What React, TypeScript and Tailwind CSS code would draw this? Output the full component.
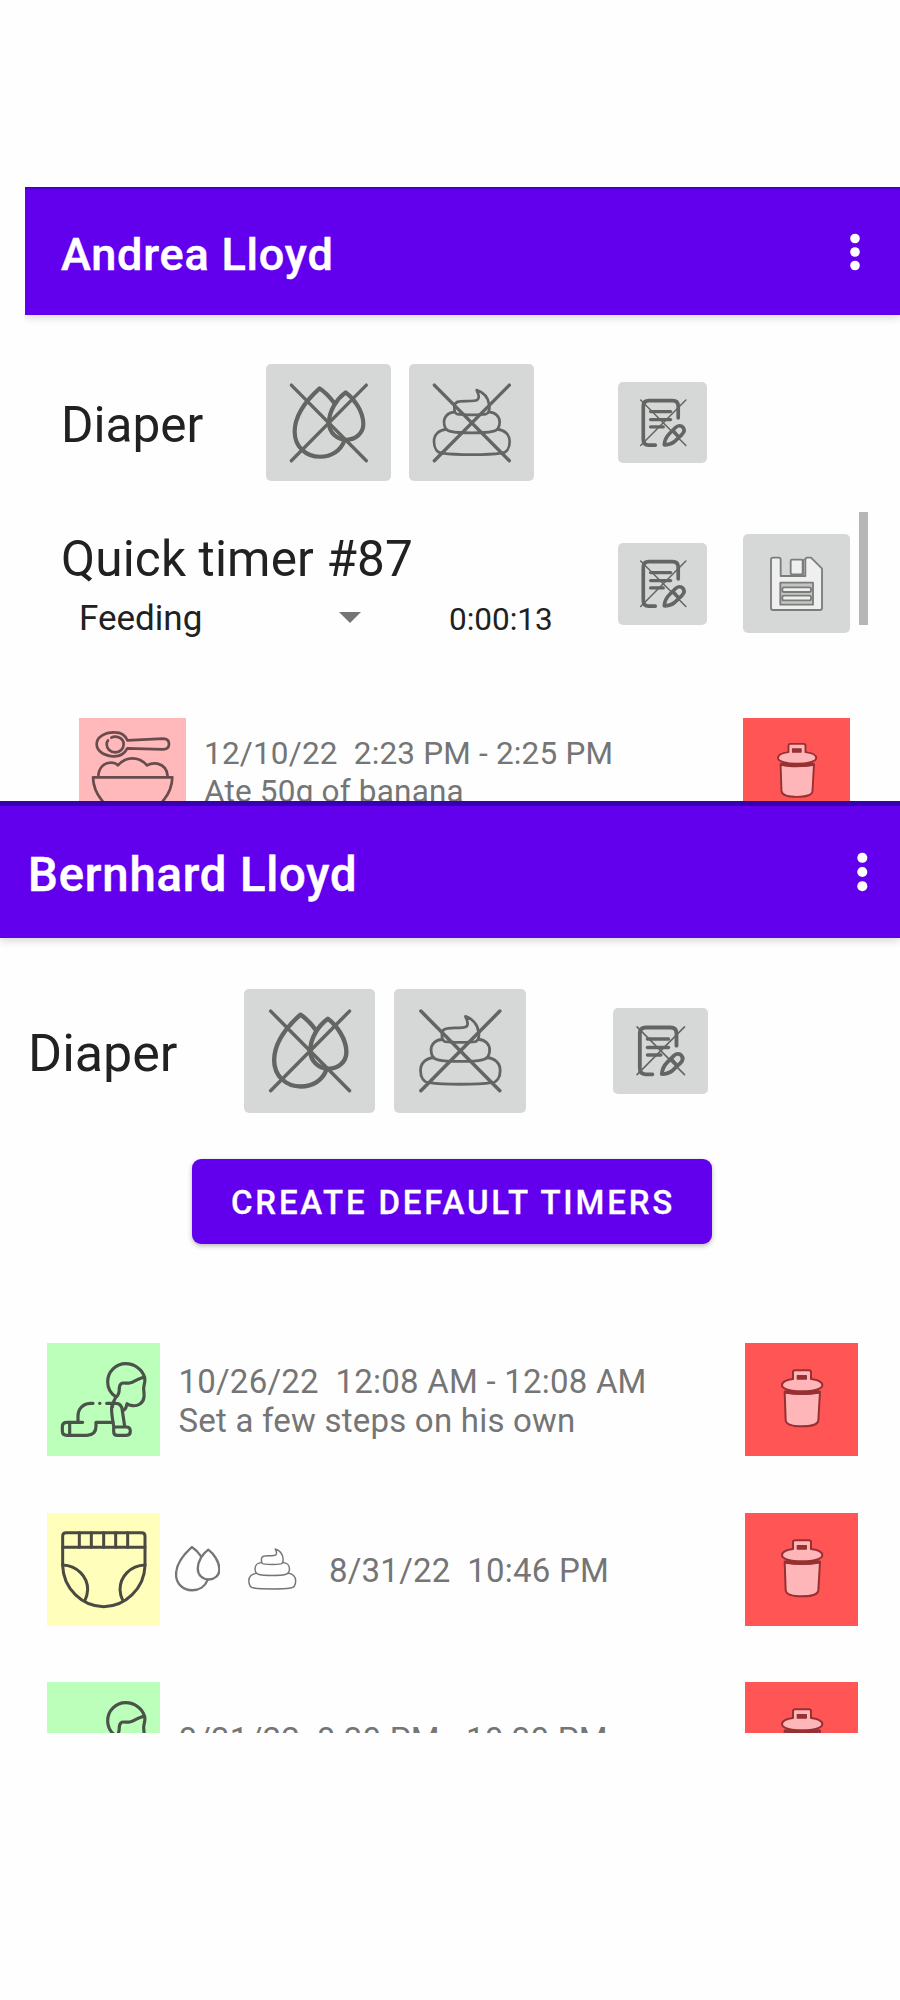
import type { ReactNode } from "react";

const DROPS = [
  "M205 117C190 97 175 82 161 73C125 105 86 150 86 203C86 248 120 278 162 278C196 278 224 260 235 230",
  "M239 85C262 102 292 140 292 180C292 208 268 227 242 227C213 227 189 206 189 176C189 140 212 105 239 85Z",
];

const POOP = [
  "M203 78C211 95 214 109 195 110C180 112 165 110 153 112C140 113 136 120 136 128C137 138 133 147 145 150C165 153 213 153 231 150C240 147 242 134 241 124C238 100 222 84 203 78Z",
  "M136 144C117 145 105 158 105 174C105 190 112 200 125 202C150 208 226 208 251 202C265 200 272 190 272 174C272 158 260 145 241 144",
  "M112 196C90 197 75 212 75 232C75 252 84 266 100 267C140 273 237 273 277 267C293 266 302 252 302 232C302 212 287 197 265 196",
];

function Lines({ paths, width }: { paths: string[]; width: number }) {
  return (
    <g fill="none" stroke="currentColor" strokeWidth={width} strokeLinecap="round" strokeLinejoin="round">
      {paths.map((d) => (
        <path key={d} d={d} />
      ))}
    </g>
  );
}

function WetIcon() {
  return (
    <svg viewBox="0 0 375 352" className="size-full text-[#636563]">
      <Lines paths={DROPS} width={12.5} />
      <Lines paths={["M76 63L301 290", "M301 63L76 290"]} width={10} />
    </svg>
  );
}

function SolidIcon() {
  return (
    <svg viewBox="0 0 375 352" className="size-full text-[#636563]">
      <Lines paths={POOP} width={8} />
      <Lines paths={["M76 63L301 290", "M301 63L76 290"]} width={10} />
    </svg>
  );
}

function NoteIcon() {
  return (
    <svg viewBox="0 0 269 245" className="size-full text-[#636563]">
      <Lines
        paths={["M181 108V73Q181 56 164 56H93Q76 56 76 73V173Q76 190 92 190H112"]}
        width={11}
      />
      <Lines paths={["M98 89H158", "M98 113H158", "M98 135H136"]} width={10} />
      <Lines
        paths={[
          "M139 189C140 172 147 163 155 155L173 137C180 130 190 130 195 136C201 143 199 151 192 158L170 179C160 187 150 189 139 189Z",
        ]}
        width={11}
      />
      <Lines paths={["M167 146L181 162"]} width={8} />
      <Lines paths={["M68 54L204 191", "M204 54L68 191"]} width={4.5} />
    </svg>
  );
}

function SaveIcon() {
  return (
    <svg viewBox="0 0 321 297" className="size-full" stroke="#7b7d7b" strokeWidth="5.5" strokeLinejoin="round">
      <path
        fill="#eeefee"
        d="M90 71H107Q113 71 113 77V126H187V77Q187 71 193 71H204L237 104V222Q237 228 231 228H90Q84 228 84 222V77Q84 71 90 71Z"
      />
      <path fill="none" d="M187 75L181 78V122" strokeWidth="4" />
      <rect x="143" y="77" width="36" height="44" rx="4" fill="#eeefee" />
      <rect x="112" y="146" width="98" height="66" fill="#c4c6c4" />
      <rect x="118" y="160" width="86" height="14" rx="5" fill="#eeefee" />
      <rect x="118" y="185" width="86" height="14" rx="5" fill="#eeefee" />
    </svg>
  );
}

function TrashIcon() {
  return (
    <svg viewBox="0 0 339 339" className="size-full" stroke="#963032" strokeWidth="6" strokeLinejoin="round">
      <path
        fill="#ffb6b8"
        d="M119 146C135 152 150 153 171 153S208 152 225 146L220 232C219 244 197 250 171 250S124 244 122 232Z"
      />
      <path fill="#963032" d="M122 145Q171 152 221 145V149Q171 156 122 149Z" />
      <path
        fill="#ffb6b8"
        d="M144 108V88Q144 82 150 82H192Q198 82 198 88V108C216 110 232 116 232 127C232 138 205 145 171 145S111 138 111 127C111 116 126 110 144 108Z"
      />
      <rect x="157" y="98" width="27" height="10" fill="#963032" strokeWidth="4" />
    </svg>
  );
}

function FeedingIcon() {
  return (
    <svg viewBox="0 0 321 321" className="size-full text-[#684b4c]">
      <Lines
        paths={[
          "M145 67L252 62Q270 62 270 78Q270 94 252 94L145 91C136 108 120 116 102 115C70 112 53 97 53 78C53 58 76 42 108 43C125 43 139 52 145 67Z",
          "M97 59C110 52 134 58 134 79C134 92 123 103 109 103C94 103 83 92 83 79Q83 72 87 67",
          "M58 175C59 149 75 133 98 134Q110 134 117 142C130 127 145 121 160 121S192 128 204 142Q218 134 235 137C255 142 265 157 266 175",
          "M42 178H280C278 230 240 272 206 275H116C82 272 44 230 42 178Z",
        ]}
        width={8}
      />
    </svg>
  );
}

function CrawlIcon() {
  return (
    <svg viewBox="0 0 339 339" className="size-full text-[#4a524a]">
      <Lines
        paths={[
          "M206 161C190 150 182 132 182 116C182 85 207 62 236 62C263 62 287 80 293 104C296 116 290 126 290 136C290 145 292 150 291 162C289 181 272 190 256 188Q246 187 240 182Q238 196 230 202",
          "M292 103C275 104 262 118 248 120C238 122 232 118 224 121C214 126 218 138 216 147C214 156 210 161 206 163Q198 176 196 192",
          "M179 181H206C220 181 225 190 226 203L233 250",
          "M195 188C191 200 195 220 200 250V266Q200 277 211 277H238Q250 277 250 265Q250 252 238 252H200",
          "M158 181H158.5",
          "M138 181H130C106 182 92 200 93 222V236",
          "M107 238H60Q46 238 46 251V264Q46 277 60 277H120Q147 276 147 250V238H198",
          "M68 238V277",
        ]}
        width={9.5}
      />
    </svg>
  );
}

function DiaperIcon() {
  return (
    <svg viewBox="0 0 339 339" className="size-full text-[#4a4a42]">
      <Lines
        paths={[
          "M47 103V69Q47 59 57 59H284Q294 59 294 69V103Z",
          "M97 59V103",
          "M133 59V103",
          "M170 59V103",
          "M206 59V103",
          "M242 59V103",
          "M47 103V158C49 228 107 281 170 281S292 228 294 158V103",
          "M47 156C90 158 122 190 122 230Q121 250 113 264",
          "M294 156C250 158 219 190 219 230Q220 250 228 264",
        ]}
        width={9}
      />
    </svg>
  );
}

function Tile({ className, children }: { className: string; children: ReactNode }) {
  return <div className={`shrink-0 ${className}`}>{children}</div>;
}

function KeyButton({ className, label, children }: { className: string; label: string; children: ReactNode }) {
  return (
    <button aria-label={label} className={`block shrink-0 rounded-[5px] bg-[#d6d8d7] ${className}`}>
      {children}
    </button>
  );
}

function Dots({ className }: { className: string }) {
  return (
    <svg viewBox="0 0 12 40" className={className} fill="#fff">
      <circle cx="6" cy="6.5" r="4.8" />
      <circle cx="6" cy="20" r="4.8" />
      <circle cx="6" cy="33.5" r="4.8" />
    </svg>
  );
}

function AndreaScreen() {
  return (
    <section className="ml-[25px] h-[614px] shrink-0 overflow-hidden">
      <header className="flex h-[127.5px] items-start bg-[#6200ee] bg-[linear-gradient(#3700b3,#6200ee00_3px)] pl-[36px] pt-[41px] shadow-[0_2px_9px_rgba(0,0,0,0.18)]">
        <h1 className="w-[787.5px] whitespace-pre text-[45px] leading-[54px] font-medium tracking-[0.8px] text-white [-webkit-text-stroke:0.5px_white]">Andrea Lloyd</h1>
        <Dots className="mt-[4px] h-[40px] w-[12px]" />
      </header>
      <div className="mt-[49px] flex h-[117.5px] items-center pl-[36px]">
        <div className="w-[205px] pt-[5px] text-[49.5px] leading-[58px] text-[#212121]">Diaper</div>
        <KeyButton label="Wet" className="h-[117.5px] w-[125px]"><WetIcon /></KeyButton>
        <KeyButton label="Solid" className="ml-[18px] h-[117.5px] w-[125px]"><SolidIcon /></KeyButton>
        <KeyButton label="Note" className="ml-[83.5px] h-[81.5px] w-[89.5px]"><NoteIcon /></KeyButton>
      </div>
      <div className="mt-[31px] flex h-[206px] items-start pl-[36px]">
        <div className="w-[556.5px] pt-[18px] text-[#212121]">
          <div className="whitespace-pre text-[49.5px] leading-[58px] tracking-[0.15px]">Quick timer #87</div>
          <div className="mt-[10px] flex items-start pl-[18px]">
            <div className="w-[260px] text-[35px] leading-[42px]">Feeding</div>
            <svg viewBox="0 0 22 11" className="mt-[14px] h-[11px] w-[22px]" fill="#757575"><path d="M0 0H22L11 11Z" /></svg>
            <div className="ml-[88px] text-[31.5px] leading-[44px]">0:00:13</div>
          </div>
        </div>
        <KeyButton label="Note" className="mt-[31px] h-[81.5px] w-[89.5px]"><NoteIcon /></KeyButton>
        <KeyButton label="Save" className="ml-[36px] mt-[22px] h-[99px] w-[107px]"><SaveIcon /></KeyButton>
        <div className="ml-[9px] h-[113px] w-[9px] bg-[#b6b6b6]" />
      </div>
      <div className="flex items-start pl-[54px]">
        <Tile className="size-[107px] bg-[#ffb9ba]"><FeedingIcon /></Tile>
        <div className="ml-[18px] w-[539px] pt-[17px] text-[31.5px] leading-[38px] tracking-[0.19px] whitespace-pre text-[#757575]">
          <div>12/10/22  2:23 PM - 2:25 PM</div>
          <div>Ate 50g of banana</div>
        </div>
        <Tile className="size-[107px] bg-[#ff5555]"><TrashIcon /></Tile>
      </div>
    </section>
  );
}

function BernhardScreen() {
  return (
    <section className="h-[932px] shrink-0 overflow-hidden">
      <header className="flex h-[137px] items-start border-t-[5px] border-[#3700b3] bg-[#6200ee] pl-[28px] pt-[41px] shadow-[0_2px_9px_rgba(0,0,0,0.18)]">
        <h1 className="w-[828px] whitespace-pre text-[47.2px] leading-[56px] font-medium tracking-[0.85px] text-white [-webkit-text-stroke:0.5px_white]">Bernhard Lloyd</h1>
        <Dots className="mt-[4px] h-[42px] w-[12.6px]" />
      </header>
      <div className="mt-[51px] flex h-[123.5px] items-center pl-[28px]">
        <div className="w-[215.5px] pt-[7px] text-[52px] leading-[60px] text-[#212121]">Diaper</div>
        <KeyButton label="Wet" className="h-[123.5px] w-[131.5px]"><WetIcon /></KeyButton>
        <KeyButton label="Solid" className="ml-[19px] h-[123.5px] w-[132px]"><SolidIcon /></KeyButton>
        <KeyButton label="Note" className="ml-[87px] h-[85.5px] w-[94.5px]"><NoteIcon /></KeyButton>
      </div>
      <button className="mt-[46.5px] ml-[192px] flex h-[85px] w-[520px] items-center justify-center rounded-[9px] bg-[#6200ee] pt-[3px] pl-[2px] text-[33px] font-medium tracking-[2.83px] whitespace-pre text-white shadow-[0_2px_5px_rgba(0,0,0,0.28)] [-webkit-text-stroke:0.3px_white]">
        CREATE DEFAULT TIMERS
      </button>
      <div className="mt-[99px] flex flex-col gap-[56.5px] pl-[46.5px] text-[33px] leading-[39px] tracking-[0.22px] whitespace-pre text-[#757575]">
        <div className="flex items-start">
          <Tile className="size-[113px] bg-[#bbffbb]"><CrawlIcon /></Tile>
          <div className="ml-[19px] w-[566.5px] pt-[19px]">
            <div>10/26/22  12:08 AM - 12:08 AM</div>
            <div>Set a few steps on his own</div>
          </div>
          <Tile className="size-[113px] bg-[#ff5555]"><TrashIcon /></Tile>
        </div>
        <div className="flex items-start">
          <Tile className="size-[113px] bg-[#ffffbb]"><DiaperIcon /></Tile>
          <div className="flex w-[585.5px] items-start pl-[15px]">
            <svg viewBox="81 68 216 216" className="mt-[33.5px] size-[45.5px] text-[#757575]"><Lines paths={DROPS} width={11} /></svg>
            <svg viewBox="71 74 235 202" className="ml-[28px] mt-[35.5px] h-[42px] w-[48.5px] text-[#757575]"><Lines paths={POOP} width={7} /></svg>
            <div className="ml-[32.5px] mt-[38.5px]">8/31/22  10:46 PM</div>
          </div>
          <Tile className="size-[113px] bg-[#ff5555]"><TrashIcon /></Tile>
        </div>
        <div className="flex items-start">
          <Tile className="size-[113px] bg-[#bbffbb]"><CrawlIcon /></Tile>
          <div className="ml-[19px] w-[566.5px] pt-[38px]">8/31/22  8:30 PM - 10:30 PM</div>
          <Tile className="size-[113px] bg-[#ff5555]"><TrashIcon /></Tile>
        </div>
      </div>
    </section>
  );
}

export default function App() {
  return (
    <main className="flex h-[2000px] w-[900px] flex-col overflow-hidden bg-[#fefefe] pt-[187px] font-['Roboto',sans-serif]">
      <AndreaScreen />
      <BernhardScreen />
    </main>
  );
}
